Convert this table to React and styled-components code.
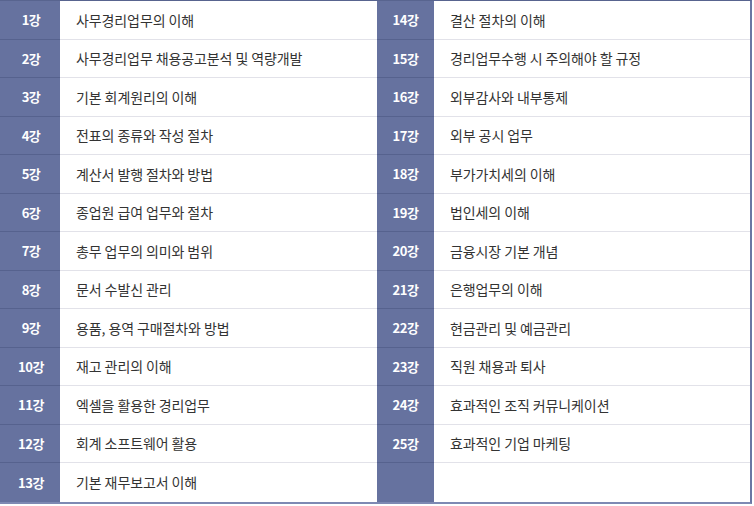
import React from "react";
import styled, { createGlobalStyle } from "styled-components";

const Global = createGlobalStyle`
  html, body { margin: 0; padding: 0; background: #fff; }
  body { font-family: "Noto Sans CJK KR", "Noto Sans", sans-serif; }
`;

const Table = styled.div`
  width: 752px;
  display: grid;
  grid-template-columns: 60px 317px 57px 1fr;
  grid-auto-rows: 38.5px;
  border-top: 1px solid #58648f;
  border-right: 2px solid #6a76a3;
  border-bottom: 2px solid #7e89b3;
  box-sizing: border-box;
`;

const Num = styled.div`
  background: #66729f;
  color: #fff;
  font-weight: 700;
  font-size: 13px;
  letter-spacing: -0.5px;
  display: flex;
  align-items: center;
  justify-content: center;
  border-bottom: ${(p) => (p.$last ? "none" : "1px solid #56628e")};
  box-sizing: border-box;
  padding-left: ${(p) => (p.$left ? "2px" : "0")};
`;

const Title = styled.div`
  background: #fff;
  color: #333;
  font-size: 14px;
  letter-spacing: -0.1px;
  display: flex;
  align-items: center;
  padding-left: 16px;
  white-space: nowrap;
  border-bottom: ${(p) => (p.$last ? "none" : "1px solid #e2e2e9")};
  box-sizing: border-box;
`;

const left = [
  "사무경리업무의 이해",
  "사무경리업무 채용공고분석 및 역량개발",
  "기본 회계원리의 이해",
  "전표의 종류와 작성 절차",
  "계산서 발행 절차와 방법",
  "종업원 급여 업무와 절차",
  "총무 업무의 의미와 범위",
  "문서 수발신 관리",
  "용품, 용역 구매절차와 방법",
  "재고 관리의 이해",
  "엑셀을 활용한 경리업무",
  "회계 소프트웨어 활용",
  "기본 재무보고서 이해",
];

const right = [
  "결산 절차의 이해",
  "경리업무수행 시 주의해야 할 규정",
  "외부감사와 내부통제",
  "외부 공시 업무",
  "부가가치세의 이해",
  "법인세의 이해",
  "금융시장 기본 개념",
  "은행업무의 이해",
  "현금관리 및 예금관리",
  "직원 채용과 퇴사",
  "효과적인 조직 커뮤니케이션",
  "효과적인 기업 마케팅",
];

export default function App() {
  return (
    <>
      <Global />
      <Table>
        {left.map((t, i) => {
          const last = i === left.length - 1;
          const r = right[i];
          return (
            <React.Fragment key={i}>
              <Num $last={last} $left>{i + 1}강</Num>
              <Title $last={last}>{t}</Title>
              <Num $last={last}>{r ? `${i + 14}강` : ""}</Num>
              <Title $last={last}>{r || ""}</Title>
            </React.Fragment>
          );
        })}
      </Table>
    </>
  );
}
